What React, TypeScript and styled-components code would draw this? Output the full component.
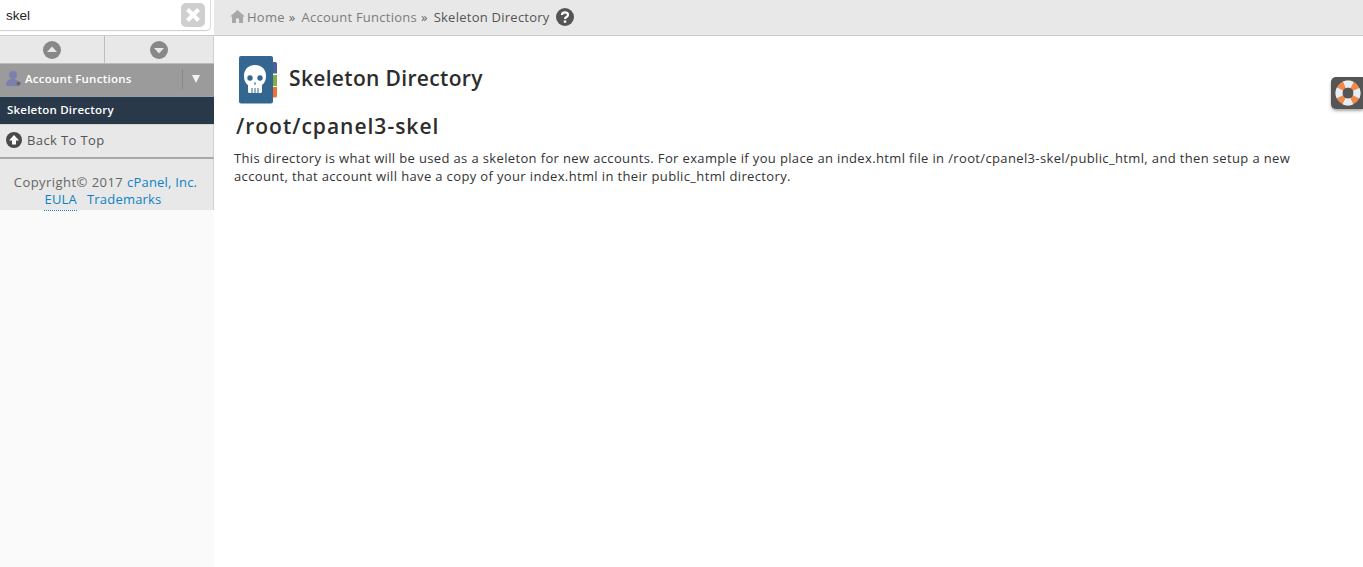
import React from "react";
import styled, { createGlobalStyle } from "styled-components";

const GlobalStyle = createGlobalStyle`
  html, body {
    margin: 0;
    padding: 0;
    height: 100%;
    background: #fff;
    font-family: "Open Sans", "DejaVu Sans", sans-serif;
    overflow: hidden;
  }
`;

const Page = styled.div`
  position: relative;
  display: grid;
  grid-template-columns: 214px 1fr;
  width: 1363px;
  height: 567px;
`;

const Sidebar = styled.aside`
  display: flex;
  flex-direction: column;
  background: #fafafa;
  height: 567px;
`;

const SearchRow = styled.div`
  height: 36px;
  box-sizing: border-box;
  background: #fff;
  border-bottom: 1px solid #ccc;
`;

const SearchBox = styled.div`
  display: flex;
  align-items: center;
  justify-content: space-between;
  box-sizing: border-box;
  width: 210px;
  height: 30px;
  padding: 2px 5px 2px 6px;
  background: #fff;
  border-radius: 0 0 4px 0;
  box-shadow: 0 1px 1px #ccc, 1px 0 1px #ddd;
  font-family: "Liberation Sans", Arial, sans-serif;
  font-size: 13.5px;
  color: #222;
`;

const ClearButton = styled.div`
  display: flex;
  align-items: center;
  justify-content: center;
  width: 24px;
  height: 24px;
  border-radius: 5px;
  background: #cfcfcf;
`;

const ArrowRow = styled.div`
  display: grid;
  grid-template-columns: 105px 1fr;
  height: 27px;
  background: #e8e8e8;
  border-right: 1px solid #d0d0d0;
`;

const ArrowCell = styled.div<{ $divider?: boolean }>`
  display: flex;
  align-items: center;
  justify-content: center;
  border-right: ${(p) => (p.$divider ? "1px solid #bdbdbd" : "none")};
`;

const GroupHeader = styled.div`
  display: flex;
  align-items: center;
  box-sizing: border-box;
  height: 34px;
  padding: 0 0 3px 5px;
  background: #9b9b9b;
  border-top: 1px solid #bcbcbc;
  border-bottom: 1px solid #8fa3ad;
  color: #fff;
  font-size: 11.5px;
  font-weight: 600;
  letter-spacing: 0.25px;
`;

const GroupLabel = styled.span`
  margin-left: 3px;
  flex: 1;
`;

const GroupToggle = styled.div`
  display: flex;
  align-items: center;
  box-sizing: border-box;
  width: 32px;
  height: 20px;
  padding-left: 9px;
  border-left: 1px solid #888;
`;

const ActiveItem = styled.div`
  display: flex;
  align-items: center;
  box-sizing: border-box;
  height: 27px;
  padding: 0 0 3px 7px;
  background: #29394a;
  color: #fff;
  font-size: 11.5px;
  font-weight: 600;
  letter-spacing: 0.22px;
`;

const BackToTop = styled.div`
  display: flex;
  align-items: center;
  gap: 5px;
  box-sizing: border-box;
  height: 35px;
  padding: 0 0 3px 6px;
  background: #e8e8e8;
  border-top: 1px solid #d4d4d4;
  border-bottom: 2px solid #a8a8a8;
  border-right: 1px solid #d0d0d0;
  color: #555;
  font-size: 13px;
  letter-spacing: 0.38px;
`;

const SideFooter = styled.div`
  box-sizing: border-box;
  height: 51px;
  padding: 15px 2px 0 0;
  background: #e8e8e8;
  border-right: 1px solid #d0d0d0;
  text-align: center;
  color: #666;
  font-size: 13px;
  line-height: 17px;
  letter-spacing: 0.45px;
`;

const FooterLinks = styled.div`
  padding-right: 5px;
`;

const FooterLink = styled.a<{ $dotted?: boolean }>`
  color: #0b84c6;
  text-decoration: none;
  letter-spacing: 0.2px;
  ${(p) => p.$dotted && "border-bottom: 1px dotted #0b84c6; padding-bottom: 2px; margin-right: 10px;"}
`;

const Main = styled.main`
  display: flex;
  flex-direction: column;
  min-width: 0;
`;

const BreadcrumbBar = styled.nav`
  display: flex;
  align-items: center;
  box-sizing: border-box;
  height: 36px;
  padding: 0 0 2px 16px;
  background: #e8e8e8;
  border-bottom: 1px solid #ccc;
  font-size: 13px;
  letter-spacing: 0.25px;
  color: #777;
`;

const Crumb = styled.span<{ $current?: boolean }>`
  color: ${(p) => (p.$current ? "#555" : "#7c7c7c")};
`;

const CrumbSep = styled.span`
  margin: 0 6px 0 4px;
  color: #666;
`;

const HelpIcon = styled.span`
  display: flex;
  margin-left: 6px;
`;

const Content = styled.div`
  padding: 20px 50px 0 21px;
`;

const TitleRow = styled.div`
  display: flex;
  align-items: center;
  gap: 10px;
  margin-left: 4px;
  height: 50px;
`;

const Title = styled.h1`
  margin: -6px 0 0;
  font-size: 21px;
  font-weight: 600;
  letter-spacing: 0.33px;
  color: #2d2d2d;
`;

const SubTitle = styled.h2`
  margin: 5px 0 0 1px;
  font-size: 21px;
  line-height: 30px;
  font-weight: 600;
  letter-spacing: 1px;
  color: #2d2d2d;
`;

const Description = styled.p`
  margin: 8px 0 0 -1px;
  font-size: 13px;
  line-height: 18px;
  letter-spacing: 0.36px;
  color: #333;
`;

const Support = styled.div`
  position: absolute;
  top: 77px;
  right: 0;
  display: flex;
  align-items: center;
  justify-content: center;
  box-sizing: border-box;
  width: 32px;
  height: 32px;
  padding-left: 2px;
  background: #555;
  border-radius: 5px 0 0 5px;
  box-shadow: 0 2px 3px #aaa;
`;

const Disc = ({ dir }: { dir: "up" | "down" }) => (
  <svg width="18" height="18" viewBox="0 0 18 18">
    <circle cx="9" cy="9" r="9" fill="#888" />
    <path d={dir === "up" ? "M4 11 L9 5.5 L14 11 Z" : "M4 7 L9 12.5 L14 7 Z"} fill="#e8e8e8" />
  </svg>
);

const SkullBook = () => (
  <svg width="40" height="50" viewBox="0 0 40 50">
    <path d="M34 6 H36.5 Q38 6 38 7.5 V17.5 H34 Z" fill="#4f5f9a" />
    <rect x="34" y="19" width="4" height="11" fill="#85ad4e" />
    <path d="M34 31 H38 V40 Q38 41.5 36.5 41.5 H34 Z" fill="#ef7330" />
    <rect x="0" y="0" width="34" height="47.5" rx="2" fill="#336791" />
    <path
      d="M16 9 C8.5 9 5 14 5 20 C5 25 7 27.5 9 29 L9 35.5 C9 36.5 10 37 11 37 L21 37 C22 37 23 36.5 23 35.5 L23 29 C25 27.5 27 25 27 20 C27 14 23.5 9 16 9 Z"
      fill="#fff"
    />
    <circle cx="11" cy="22" r="2.7" fill="#336791" />
    <circle cx="21" cy="22" r="2.7" fill="#336791" />
    <path d="M15 28.5 L16 25.5 L17 28.5 Z" fill="#336791" />
    <path d="M13 32 V37 M16 32 V37 M19 32 V37" stroke="#336791" strokeWidth="1" />
  </svg>
);

const LifeRing = () => (
  <svg width="26" height="26" viewBox="0 0 26 26">
    <circle cx="13" cy="13" r="9" fill="none" stroke="#f08a4b" strokeWidth="7" />
    <circle cx="13" cy="13" r="9" fill="none" stroke="#e6eef5" strokeWidth="7" strokeDasharray="8 6.14" strokeDashoffset="4" />
  </svg>
);

export default function App() {
  return (
    <Page>
      <GlobalStyle />
      <Sidebar>
        <SearchRow>
          <SearchBox>
            skel
            <ClearButton>
              <svg width="16" height="16" viewBox="0 0 16 16">
                <path d="M2.5 2.5 L13.5 13.5 M13.5 2.5 L2.5 13.5" stroke="#fff" strokeWidth="4" />
              </svg>
            </ClearButton>
          </SearchBox>
        </SearchRow>
        <ArrowRow>
          <ArrowCell $divider>
            <Disc dir="up" />
          </ArrowCell>
          <ArrowCell>
            <Disc dir="down" />
          </ArrowCell>
        </ArrowRow>
        <GroupHeader>
          <svg width="17" height="17" viewBox="0 0 17 17">
            <circle cx="8" cy="5" r="4" fill="#7d80ad" />
            <path d="M1 16 C1 10 4 9 8 9 C12 9 14 11 14 16 Z" fill="#7d80ad" />
            <circle cx="13.5" cy="13.5" r="2" fill="#666" />
          </svg>
          <GroupLabel>Account Functions</GroupLabel>
          <GroupToggle>
            <svg width="8" height="8" viewBox="0 0 8 8">
              <path d="M0 0 H8 L4 8 Z" fill="#f2f2f2" />
            </svg>
          </GroupToggle>
        </GroupHeader>
        <ActiveItem>Skeleton Directory</ActiveItem>
        <BackToTop>
          <svg width="16" height="16" viewBox="0 0 16 16">
            <circle cx="8" cy="8" r="8" fill="#4a4a4a" />
            <path d="M8 3 L13 8.5 H10 V12.5 H6 V8.5 H3 Z" fill="#fff" />
          </svg>
          Back To Top
        </BackToTop>
        <SideFooter>
          Copyright© 2017 <FooterLink>cPanel, Inc.</FooterLink>
          <FooterLinks>
            <FooterLink $dotted>EULA</FooterLink>
            <FooterLink>Trademarks</FooterLink>
          </FooterLinks>
        </SideFooter>
      </Sidebar>
      <Main>
        <BreadcrumbBar>
          <svg width="15" height="13" viewBox="0 0 15 13" style={{ marginRight: 2 }}>
            <path d="M7.5 0 L15 6.5 H13 V13 H9 V8.5 H6 V13 H2 V6.5 H0 Z" fill="#a8a8a8" />
          </svg>
          <Crumb>Home</Crumb>
          <CrumbSep>»</CrumbSep>
          <Crumb>Account Functions</Crumb>
          <CrumbSep>»</CrumbSep>
          <Crumb $current>Skeleton Directory</Crumb>
          <HelpIcon>
            <svg width="18" height="18" viewBox="0 0 18 18">
              <circle cx="9" cy="9" r="9" fill="#555" />
              <path d="M6 7 C6 3.5 12 3.5 12 7 C12 9 9 9 9 11" fill="none" stroke="#fff" strokeWidth="2.2" />
              <rect x="7.8" y="12.4" width="2.4" height="2.4" fill="#fff" />
            </svg>
          </HelpIcon>
        </BreadcrumbBar>
        <Content>
          <TitleRow>
            <SkullBook />
            <Title>Skeleton Directory</Title>
          </TitleRow>
          <SubTitle>/root/cpanel3-skel</SubTitle>
          <Description>
            This directory is what will be used as a skeleton for new accounts. For example if you place an index.html file in /root/cpanel3-skel/public_html, and then setup a new account, that account will have a copy of your index.html in their public_html directory.
          </Description>
        </Content>
      </Main>
      <Support>
        <LifeRing />
      </Support>
    </Page>
  );
}
